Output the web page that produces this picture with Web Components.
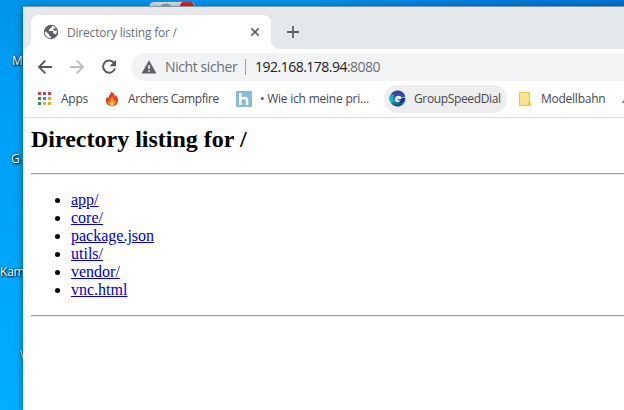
<!DOCTYPE html>
<html lang="de">
<head>
<meta charset="utf-8">
<title>Directory listing for /</title>
<style>
  html, body {
    margin: 0;
    height: 100%;
    overflow: hidden;
  }
  desktop-screen {
    font-family: "Open Sans", "Noto Sans", sans-serif;
  }
</style>
</head>
<body>
<desktop-screen>
  <desktop-label slot="icons" style="left: 12px; top: 53px">M</desktop-label>
  <desktop-label slot="icons" style="left: 11px; top: 151px">G</desktop-label>
  <desktop-label slot="icons" style="left: 0; top: 264px">Kam</desktop-label>
  <desktop-label slot="icons" style="left: 20px; top: 347px">W</desktop-label>
  <browser-window>
    <browser-tab slot="tabs">Directory listing for /</browser-tab>
    <address-bar slot="toolbar" host="192.168.178.94" port=":8080">Nicht sicher</address-bar>
    <bookmark-item slot="bookmarks" icon="apps" style="width: 60px">Apps</bookmark-item>
    <bookmark-item slot="bookmarks" icon="flame" style="width: 124px; letter-spacing: -0.42px">Archers Campfire</bookmark-item>
    <bookmark-item slot="bookmarks" icon="blog" style="width: 144px; letter-spacing: -0.22px">• Wie ich meine pri...</bookmark-item>
    <bookmark-item slot="bookmarks" icon="dial" active style="width: 123px; letter-spacing: -0.36px">GroupSpeedDial</bookmark-item>
    <bookmark-item slot="bookmarks" icon="folder" style="width: 93px">Modellbahn</bookmark-item>
    <bookmark-item slot="bookmarks" icon="more" style="width: 30px"></bookmark-item>
    <directory-listing path="/" files="app/ core/ package.json utils/ vendor/ vnc.html"></directory-listing>
  </browser-window>
</desktop-screen>

<script>
const icons = {
  globe: `<svg width="16" height="16" viewBox="0 0 16 16"><circle cx="8" cy="8" r="7.2" fill="#5f6368"/><path d="M2.2 7.2 6 10.2v1.4l1.8 1v1.5C4.300 14 1.900 11.300 1.900 8zM8.800 2c.4 1.300-.3 1.900-1.500 2.100v1.500H5.900v1.500h4.200v2.300h1.500l1 1.200c1-1.300 1.400-2.700 1.100-4.300l-1.500.8-1.800-1V4.600h1.800l.5-.8C11.600 2.700 10.300 2.100 8.800 2z" fill="#fff"/></svg>`,
  close: `<svg width="10" height="10" viewBox="0 0 10 10"><path d="M1.300 1.300l7.400 7.400M8.700 1.300L1.300 8.700" stroke="#5f6368" stroke-width="1.700"/></svg>`,
  plus: `<svg width="12" height="12" viewBox="0 0 12 12"><path d="M6 0v12M0 6h12" stroke="#5f6368" stroke-width="1.800"/></svg>`,
  back: `<svg width="16" height="16" viewBox="0 0 16 16"><path d="M15 8H2.500M8.300 1.700L2 8l6.300 6.300" fill="none" stroke="#55595e" stroke-width="1.900"/></svg>`,
  forward: `<svg width="16" height="16" viewBox="0 0 16 16"><path d="M1 8h12.500M7.700 1.700L14 8l-6.300 6.300" fill="none" stroke="#bcbec0" stroke-width="1.900"/></svg>`,
  reload: `<svg width="16" height="16" viewBox="0 0 16 16"><path d="M13.300 4.300A6.100 6.100 0 1 0 14 9.500" fill="none" stroke="#55595e" stroke-width="2"/><path d="M15 .8v6.400H8.600z" fill="#55595e"/></svg>`,
  warning: `<svg width="16" height="14" viewBox="0 0 16 14"><path d="M8 .3L15.500 13.500H.5z" fill="#5f6368"/><path d="M7.200 5h1.600v4H7.200zM7.200 10.200h1.600v1.600H7.200z" fill="#f1f3f4"/></svg>`,
  apps: `<svg width="16" height="16" viewBox="0 0 16 16"><path d="M2 1h3v3H2zM7 1h3v3H7zM12 1h3v3h-3z" fill="#d4434a"/><path d="M2 6h3v3H2zM2 11h3v3H2z" fill="#3b8b5b"/><path d="M7 6h3v3H7z" fill="#3b7fe0"/><path d="M12 6h3v3h-3zM7 11h3v3H7zM12 11h3v3h-3z" fill="#e4ab2c"/></svg>`,
  flame: `<svg width="16" height="16" viewBox="0 0 16 16"><path d="M7 .8c2.800 1.200 4 3.200 3.700 5.200.6-.6.900-1.300.9-2.300 2 2.200 2.800 4.700 2.200 7.300-.6 2.600-2.700 4.200-5.800 4.200S2.400 13.400 2 11c-.4-2.300.2-4 1-5.500.3 1 .7 1.600 1.300 2C4.300 4.500 6.800 3.800 7 .8z" fill="#dc4226"/><path d="M8 5c2 2.200 1.600 3.600 2.200 5 .7-.4.900-1.200.9-1.900 2 3.400.4 6.800-3.100 6.800-3.300 0-5-2.400-4-5.400.3.800.8 1.200 1.500 1.400C5.200 8.600 7.700 7.500 8 5z" fill="#f77b24"/><path d="M8 9.300c1.200 1.200 2 2.400 1.800 3.600-.3 2.400-3.600 2.300-3.800 0-.1-1.300 1.500-2.100 2-3.600z" fill="#fbd34b"/></svg>`,
  blog: `<svg width="16" height="16" viewBox="0 0 16 16"><path d="M0 0h16v16H0z" fill="#88bcdf"/><path d="M4.300 2v12M4.300 8.500c1-1.900 6.800-2.500 6.800 1V14" fill="none" stroke="#fff" stroke-width="2.500"/></svg>`,
  dial: `<svg width="17" height="17" viewBox="0 0 17 17"><defs><linearGradient id="g" x1="0" y1="0" x2="0" y2="1"><stop offset="0" stop-color="#4a2d9a"/><stop offset=".35" stop-color="#2456a8"/><stop offset=".65" stop-color="#19a5bd"/><stop offset="1" stop-color="#17357c"/></linearGradient></defs><path d="M16.500 7.500A8 8 0 1 0 15.200 13 8 8 0 0 0 16.600 9l-2.600.3z" fill="url(#g)"/><path d="M1 5a8 8 0 0 0 1.500 8.800C4.500 12 3 8 5.500 4.500z" fill="#18b4cc"/><path d="M17 6.500L12.600 8c-.7-2.500-4.600-3-6.100-.6-1.600 2.600.6 5.400 3.300 4.400 2.400-.8 3.600-2.200 7.200-2.800z" fill="#eeeeee"/><path d="M8 8.300c1.500 1.700 3.500 1.300 5-.4l3.500-.2c-1 4.500-4.600 6.500-7.500 5.200 2-.6 2.600-1.600 3.200-2.500-1.800.6-3.500.2-4.200-2.100z" fill="#232c83"/></svg>`,
  folder: `<svg width="16" height="16" viewBox="0 0 16 16"><path d="M2.500 1.500h10v9.300l1 .7v3h-11z" fill="#fde28c" stroke="#e5c453"/><path d="M11.500 14v-3.200h1.500" fill="none" stroke="#e5c453"/></svg>`,
  more: `<svg width="16" height="16" viewBox="0 0 16 16"><path d="M1.500 12l3-4" stroke="#35a58b" stroke-width="1.500"/></svg>`,
};

// Attaches an open shadow root filled with the given markup.
function render(el, html) {
  el.attachShadow({ mode: 'open' }).innerHTML = html;
}

class DesktopScreen extends HTMLElement {
  constructor() {
    super();
    render(this, `
      <style>
        :host {
          display: flex;
          position: relative;
          box-sizing: border-box;
          width: 624px;
          height: 410px;
          padding: 6px 0 0 23px;
          overflow: hidden;
          background: linear-gradient(#0094ea, #009ef6 20%, #00a6fb 60%, #00adff);
        }
        .sky {
          position: absolute;
          top: 0; left: 0; right: 0;
          height: 6px;
          background: linear-gradient(90deg, #0094ea, #0092e8 50%, #007fd6 75%, #0074ca);
        }
        .app {
          position: absolute;
          left: 149px;
          top: 2px;
          width: 46px;
          height: 14px;
          border-radius: 5px;
          background: radial-gradient(circle at 38px 6px, #dc2027 7px, transparent 8px), radial-gradient(circle at 17px 8px, #9a9fa4 6px, transparent 7px), #d4dde3;
        }
      </style>
      <div class="sky"></div>
      <div class="app"></div>
      <slot name="icons"></slot>
      <slot></slot>
    `);
  }
}

class DesktopLabel extends HTMLElement {
  constructor() {
    super();
    render(this, `
      <style>
        :host {
          position: absolute;
          font-size: 12px;
          line-height: 16px;
          letter-spacing: -0.2px;
          color: #fff;
          text-shadow: 1px 1px 2px #000, 0 0 2px rgba(0,0,0,0.7);
        }
      </style>
      <slot></slot>
    `);
  }
}

class BrowserWindow extends HTMLElement {
  constructor() {
    super();
    render(this, `
      <style>
        :host {
          display: flex;
          flex-direction: column;
          flex: 1;
          min-width: 0;
          position: relative;
          background: #fff;
          box-shadow: 0 2px 7px rgba(0,0,0,0.5);
        }
        .strip {
          display: flex;
          box-sizing: border-box;
          height: 43px;
          padding: 8px 0 0 8px;
          border-top: 1px solid #7f98a9;
          background: #e5e9ec;
        }
        .new {
          display: flex;
          align-items: center;
          padding-left: 16px;
        }
        .toolbar {
          display: flex;
          align-items: center;
          gap: 16px;
          height: 36px;
          padding-left: 14px;
        }
        .toolbar svg {
          flex: none;
        }
        .bookmarks {
          display: flex;
          align-items: center;
          box-sizing: border-box;
          height: 33px;
          padding: 0 0 5px 8px;
          border-bottom: 1px solid #dadce0;
          overflow: hidden;
        }
      </style>
      <div class="strip"><slot name="tabs"></slot><div class="new">${icons.plus}</div></div>
      <div class="toolbar">${icons.back}${icons.forward}${icons.reload}<slot name="toolbar"></slot></div>
      <div class="bookmarks"><slot name="bookmarks"></slot></div>
      <slot></slot>
    `);
  }
}

class BrowserTab extends HTMLElement {
  constructor() {
    super();
    render(this, `
      <style>
        :host {
          display: flex;
          align-items: center;
          position: relative;
          box-sizing: border-box;
          width: 240px;
          height: 34px;
          padding: 0 11px 0 12px;
          border-radius: 8px 8px 0 0;
          background: #fff;
          color: #6b6f74;
          font-size: 12px;
          letter-spacing: -0.2px;
        }
        /* curved feet on both sides of the tab */
        :host::before, :host::after {
          content: '';
          position: absolute;
          bottom: 0;
          width: 8px;
          height: 8px;
        }
        :host::before {
          left: -8px;
          background: radial-gradient(circle at 0 0, transparent 7.5px, #fff 8px);
        }
        :host::after {
          right: -8px;
          background: radial-gradient(circle at 100% 0, transparent 7.5px, #fff 8px);
        }
        span {
          flex: 1;
          padding-left: 8px;
          white-space: nowrap;
        }
      </style>
      ${icons.globe}<span><slot></slot></span>${icons.close}
    `);
  }
}

class AddressBar extends HTMLElement {
  constructor() {
    super();
    render(this, `
      <style>
        :host {
          display: flex;
          align-items: center;
          flex: 1;
          height: 28px;
          margin-left: -2px;
          padding-left: 10px;
          border-radius: 14px 0 0 14px;
          background: #f1f3f4;
          color: #6b6f74;
          font-size: 14px;
          line-height: 20px;
          white-space: nowrap;
        }
        .state {
          width: 72px;
          padding: 0 8px;
          letter-spacing: -0.4px;
        }
        .url {
          padding-left: 9px;
          border-left: 1px solid #9aa0a6;
          line-height: 16px;
          letter-spacing: -0.51px;
        }
        .host {
          color: #202124;
        }
      </style>
      ${icons.warning}
      <div class="state"><slot></slot></div>
      <div class="url"><span class="host">${this.getAttribute('host')}</span>${this.getAttribute('port')}</div>
    `);
  }
}

class BookmarkItem extends HTMLElement {
  constructor() {
    super();
    render(this, `
      <style>
        :host {
          display: flex;
          align-items: center;
          flex: none;
          box-sizing: border-box;
          height: 28px;
          margin-right: 8px;
          padding-left: 5px;
          border-radius: 14px;
          color: #45484c;
          font-size: 12px;
          letter-spacing: -0.25px;
          white-space: nowrap;
        }
        :host([active]) {
          margin-left: 1px;
          background: #eeeeee;
        }
        svg {
          flex: none;
          margin-right: 8px;
        }
        :host([icon="apps"]) svg {
          margin-right: 9px;
        }
        :host([icon="folder"]) svg {
          margin: 0 8px 0 -3px;
        }
      </style>
      ${icons[this.getAttribute('icon')]}<slot></slot>
    `);
  }
}

class DirectoryListing extends HTMLElement {
  constructor() {
    super();
    const rows = this.getAttribute('files').split(' ')
      .map((file) => `<li><a href="#">${file}</a></li>`)
      .join('');
    render(this, `
      <style>
        :host {
          display: block;
          flex: 1;
          padding: 7px 0 0 8px;
          font-family: "Liberation Serif", serif;
          font-size: 16px;
          line-height: 18px;
          color: #000;
        }
        h2 {
          margin: 0 0 20px;
          font-size: 24px;
          line-height: 28px;
        }
        hr {
          margin: 0;
          border: 0;
          height: 1px;
          background: #9a9a9a;
          border-bottom: 1px solid #eee;
        }
        ul {
          margin: 16px 0;
          padding-left: 40px;
        }
        a {
          color: #0000c8;
        }
      </style>
      <h2>Directory listing for ${this.getAttribute('path')}</h2>
      <hr>
      <ul>${rows}</ul>
      <hr>
    `);
  }
}

window.customElements.define('desktop-screen', DesktopScreen);
window.customElements.define('desktop-label', DesktopLabel);
window.customElements.define('browser-window', BrowserWindow);
window.customElements.define('browser-tab', BrowserTab);
window.customElements.define('address-bar', AddressBar);
window.customElements.define('bookmark-item', BookmarkItem);
window.customElements.define('directory-listing', DirectoryListing);
</script>
</body>
</html>
